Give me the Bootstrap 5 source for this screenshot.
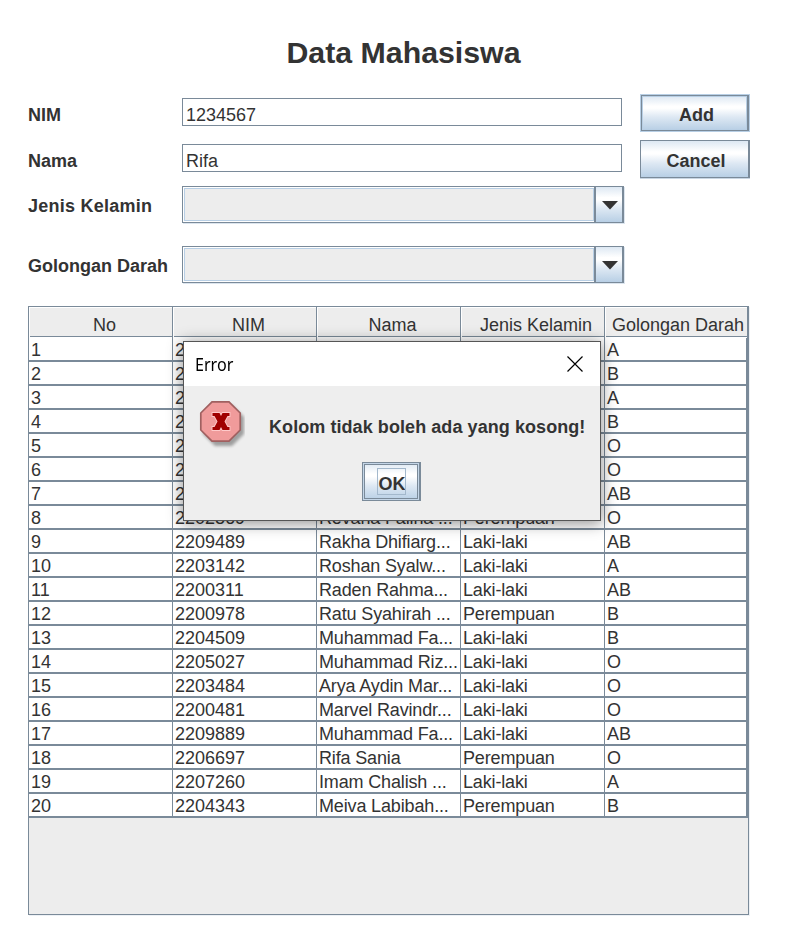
<!DOCTYPE html>
<html lang="id">
<head>
<meta charset="utf-8">
<meta name="viewport" content="width=device-width, initial-scale=1">
<title>Data Mahasiswa</title>
<link href="https://cdn.jsdelivr.net/npm/bootstrap@5.3.0/dist/css/bootstrap.min.css" rel="stylesheet">
<style>
  :root { --steel: #7a8a99; --sky: #b8cfe5; --ink: #333; --panel: #ededed; }
  body { font-family: "Liberation Sans", Arial, sans-serif; font-size: 18px; line-height: 22px; color: var(--ink); background: #fff; height: 934px; overflow: hidden; }
  .frame-body { padding: 35px 0 0 28px; width: 789px; }
  .app-title { font-size: 30.3px; line-height: 36px; font-weight: 700; width: 750px; margin: 0 0 23px -28px; padding-left: 57px; }
  .fields { width: 596px; padding-top: 4px; }
  .fields .caption { width: 154px; font-weight: 700; white-space: nowrap; padding-top: 5px; line-height: 24px; }
  .line-1 { height: 28px; margin-bottom: 18px; }
  .line-2 { height: 28px; margin-bottom: 14px; }
  .line-3 { height: 37px; margin-bottom: 23px; }
  .line-4 { height: 37px; margin-bottom: 23px; }
  .line-3 .caption, .line-4 .caption { padding-top: 8px; }
  .line-3 .caption { letter-spacing: .25px; }
  .metal-input { width: 440px; height: 28px; border: 1px solid var(--steel); border-radius: 0; padding: 6px 3px 0 3px; font-size: 18px; line-height: 20px; color: var(--ink); background: #fff; }
  .metal-combo { width: 442px; height: 37px; border: 1px solid var(--steel); box-shadow: 1px 1px 0 #dce5ee; }
  .combo-value { background: var(--panel); border: 1px solid var(--sky); margin: 1px 0 1px 1px; }
  .metal { background: linear-gradient(to bottom, #dde8f3 0, #fff 30%, #fff 36%, #dde8f3 62%, #b8cfe5 100%); }
  .combo-arrow { width: 29px; padding: 1px 0 0 1px; border-left: 2px solid var(--steel); border-right: 1px solid var(--steel); }
  .metal-btn { border: 1px solid var(--steel); border-right-width: 2px; border-radius: 0; padding: 0; width: 110px; font-size: 18px; font-weight: 700; color: var(--ink); line-height: 22px; }
  .metal-btn:hover { color: var(--ink); border-color: var(--steel); }
  .btn-add { width: 108px; height: 36px; margin: 1px 0 0 1px; padding: 3px 0 0 4px; box-shadow: 0 0 0 1px var(--sky), inset 0 0 0 1px var(--sky); }
  .btn-cancel { height: 38px; margin-top: 9px; padding: 3px 0 0 3px; box-shadow: 0 1px 0 #c9d6e3; }
  .grid-pane { width: 721px; height: 609px; border: 1px solid var(--steel); background: var(--panel); box-shadow: 1px 1px 0 #edf1f5; }
  .grid-pane table { table-layout: fixed; width: 719px; border-collapse: separate; border-spacing: 0; color: var(--ink); white-space: nowrap; }
  .grid-pane th { height: 31px; padding: 5px 0 0 7px; font-weight: 400; text-align: center; line-height: 22px; background: var(--panel); border-right: 1px solid var(--steel); box-shadow: inset 1px 1px 0 #fff, inset 0 -1px 0 #fff, inset 0 -2px 0 var(--steel); vertical-align: middle; }
  .grid-pane th:nth-child(-n+3) { padding-left: 8px; }
  .grid-pane th:last-child { padding-left: 4px; }
  .grid-pane td { height: 24px; padding: 2px 0 0 2px; line-height: 20px; background: #fff; border-right: 1px solid var(--steel); border-bottom: 2px solid var(--steel); overflow: hidden; vertical-align: top; }
  .grid-pane td:nth-child(3), .grid-pane td:nth-child(4) { letter-spacing: -.15px; }
  .grid-pane td:last-child { border-right-width: 2px; }
  .error-dialog { left: 183px; top: 341px; width: 418px; height: 180px; background: #eee; border: 1px solid #555; box-shadow: 0 2px 14px 1px rgba(0,0,0,.42); }
  .dialog-bar { height: 44px; background: #fff; padding: 0 17px 0 11px; font: 17.5px/22px "Noto Sans", "Open Sans", sans-serif; color: #000; }
  .dialog-bar .bar-text { transform: scaleX(.92); transform-origin: left; }
  .dialog-main { padding: 14px 0 0 15px; height: 76px; }
  .dialog-msg { font-weight: 700; padding: 16px 0 0 24px; white-space: nowrap; line-height: 22px; letter-spacing: .07px; }
  .btn-ok { width: 59px; height: 39px; margin-left: 178px; border: 1px solid var(--steel); border-right-width: 2px; box-shadow: inset 0 0 0 1px #c4d6e8, inset 0 0 0 2px var(--steel); }
  .ok-focus { width: 29px; height: 27px; border: 1px solid #a3b8cc; padding: 4px 0 0 1px; overflow: hidden; }
</style>
<script src="https://cdn.jsdelivr.net/npm/bootstrap@5.3.0/dist/js/bootstrap.bundle.min.js"></script>
</head>
<body class="position-relative">
<main class="frame-body">
  <h1 class="app-title text-center">Data Mahasiswa</h1>
  <div class="d-flex">
    <form class="fields">
      <div class="line-1 d-flex"><label class="caption" for="nim">NIM</label><input id="nim" class="metal-input" value="1234567"></div>
      <div class="line-2 d-flex"><label class="caption" for="nama">Nama</label><input id="nama" class="metal-input" value="Rifa"></div>
      <div class="line-3 d-flex"><div class="caption">Jenis Kelamin</div>
        <div class="metal-combo d-flex"><div class="combo-value flex-grow-1"></div><div class="combo-arrow metal d-flex align-items-center justify-content-center"><svg width="16" height="9" viewBox="0 0 16 9"><path d="M0 0H16L8 8.5Z" fill="#333"/></svg></div></div></div>
      <div class="line-4 d-flex"><div class="caption">Golongan Darah</div>
        <div class="metal-combo d-flex"><div class="combo-value flex-grow-1"></div><div class="combo-arrow metal d-flex align-items-center justify-content-center"><svg width="16" height="9" viewBox="0 0 16 9"><path d="M0 0H16L8 8.5Z" fill="#333"/></svg></div></div></div>
    </form>
    <div class="d-flex flex-column ms-3">
      <button type="button" class="btn metal-btn btn-add metal">Add</button>
      <button type="button" class="btn metal-btn btn-cancel metal">Cancel</button>
    </div>
  </div>
  <div class="grid-pane">
    <table>
      <colgroup><col style="width:144px"><col style="width:144px"><col style="width:144px"><col style="width:144px"><col></colgroup>
      <thead><tr><th>No</th><th>NIM</th><th>Nama</th><th>Jenis Kelamin</th><th>Golongan Darah</th></tr></thead>
      <tbody>
        <tr><td>1</td><td>2</td><td></td><td></td><td>A</td></tr>
        <tr><td>2</td><td>2</td><td></td><td></td><td>B</td></tr>
        <tr><td>3</td><td>2</td><td></td><td></td><td>A</td></tr>
        <tr><td>4</td><td>2</td><td></td><td></td><td>B</td></tr>
        <tr><td>5</td><td>2</td><td></td><td></td><td>O</td></tr>
        <tr><td>6</td><td>2</td><td></td><td></td><td>O</td></tr>
        <tr><td>7</td><td>2</td><td></td><td></td><td>AB</td></tr>
        <tr><td>8</td><td>2202869</td><td>Revana Falina ...</td><td>Perempuan</td><td>O</td></tr>
        <tr><td>9</td><td>2209489</td><td>Rakha Dhifiarg...</td><td>Laki-laki</td><td>AB</td></tr>
        <tr><td>10</td><td>2203142</td><td>Roshan Syalw...</td><td>Laki-laki</td><td>A</td></tr>
        <tr><td>11</td><td>2200311</td><td>Raden Rahma...</td><td>Laki-laki</td><td>AB</td></tr>
        <tr><td>12</td><td>2200978</td><td>Ratu Syahirah ...</td><td>Perempuan</td><td>B</td></tr>
        <tr><td>13</td><td>2204509</td><td>Muhammad Fa...</td><td>Laki-laki</td><td>B</td></tr>
        <tr><td>14</td><td>2205027</td><td>Muhammad Riz...</td><td>Laki-laki</td><td>O</td></tr>
        <tr><td>15</td><td>2203484</td><td>Arya Aydin Mar...</td><td>Laki-laki</td><td>O</td></tr>
        <tr><td>16</td><td>2200481</td><td>Marvel Ravindr...</td><td>Laki-laki</td><td>O</td></tr>
        <tr><td>17</td><td>2209889</td><td>Muhammad Fa...</td><td>Laki-laki</td><td>AB</td></tr>
        <tr><td>18</td><td>2206697</td><td>Rifa Sania</td><td>Perempuan</td><td>O</td></tr>
        <tr><td>19</td><td>2207260</td><td>Imam Chalish ...</td><td>Laki-laki</td><td>A</td></tr>
        <tr><td>20</td><td>2204343</td><td>Meiva Labibah...</td><td>Perempuan</td><td>B</td></tr>
      </tbody>
    </table>
  </div>
</main>
<section class="error-dialog position-absolute" role="alertdialog" aria-label="Error">
  <div class="dialog-bar d-flex align-items-center justify-content-between">
    <span class="bar-text">Error</span>
    <svg width="16" height="16" viewBox="0 0 16 16"><path d="M.5 .5L15.5 15.5M15.5 .5L.5 15.5" stroke="#000" stroke-width="1.2"/></svg>
  </div>
  <div class="dialog-main d-flex">
    <svg width="46" height="50" viewBox="0 0 46 50">
      <defs><filter id="soft" x="-20%" y="-20%" width="140%" height="140%"><feGaussianBlur stdDeviation="1.8"/></filter></defs>
      <path d="M16 5H33L45 17V34L33 46H16L4 34V17Z" fill="#000" opacity=".33" filter="url(#soft)"/>
      <path d="M13 1.8H30L41.2 13V30L30 41.2H13L1.8 30V13Z" fill="#f09b9b" stroke="#a06060" stroke-width="1.7"/>
      <path d="M13.500 13H20.500L22 16L23.500 13H30.500V16H28.500L25.500 21.500L28.500 27H30.500V30H23.500L22 27L20.500 30H13.500V27H15.500L18.500 21.500L15.500 16H13.500Z" fill="#a00000" stroke="#ffcaca" stroke-width="1.8" paint-order="stroke"/>
    </svg>
    <div class="dialog-msg">Kolom tidak boleh ada yang kosong!</div>
  </div>
  <button type="button" class="btn metal-btn btn-ok metal d-flex align-items-center justify-content-center"><span class="ok-focus">OK</span></button>
</section>
</body>
</html>
